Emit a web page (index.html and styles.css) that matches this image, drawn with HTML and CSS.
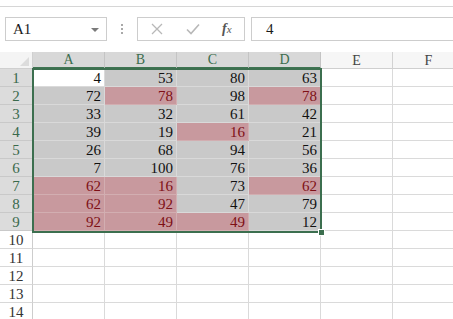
FILE: index.html
```html
<!DOCTYPE html>
<html lang="en">
<head>
  <meta charset="UTF-8">
  <title>Sheet1</title>
  <link rel="stylesheet" href="styles.css">
</head>
<body>
  <div class="ribbon"></div>

  <div class="formula-bar">
    <div class="name-box">
      <span>A1</span>
      <svg class="caret" width="8" height="5" viewBox="0 0 8 5"><path d="M0 0h8L4 4z" fill="#7a7a7a"/></svg>
    </div>
    <div class="grip"><i></i><i></i><i></i></div>
    <div class="fx-buttons">
      <svg class="fx-btn" width="12" height="12" viewBox="0 0 12 12"><path d="M1 1l10 10M11 1L1 11" stroke="#b8b8b8" stroke-width="1.3" fill="none"/></svg>
      <svg class="fx-btn" width="14" height="12" viewBox="0 0 14 12"><path d="M1 6.5l4 4 8-9" stroke="#b8b8b8" stroke-width="1.6" fill="none"/></svg>
      <span class="fx"><em>f</em><small>x</small></span>
    </div>
    <div class="formula-input">4</div>
  </div>

  <div class="sheet">
    <div class="corner"><span class="corner-tri"></span></div>
    <div class="col-head sel">A</div>
    <div class="col-head sel">B</div>
    <div class="col-head sel">C</div>
    <div class="col-head sel">D</div>
    <div class="col-head">E</div>
    <div class="col-head">F</div>

    <div class="row-head sel">1</div>
    <div class="cell active">4</div><div class="cell in">53</div><div class="cell in">80</div><div class="cell in">63</div><div class="cell"></div><div class="cell"></div>

    <div class="row-head sel">2</div>
    <div class="cell in">72</div><div class="cell bad">78</div><div class="cell in">98</div><div class="cell bad">78</div><div class="cell"></div><div class="cell"></div>

    <div class="row-head sel">3</div>
    <div class="cell in">33</div><div class="cell in">32</div><div class="cell in">61</div><div class="cell in">42</div><div class="cell"></div><div class="cell"></div>

    <div class="row-head sel">4</div>
    <div class="cell in">39</div><div class="cell in">19</div><div class="cell bad">16</div><div class="cell in">21</div><div class="cell"></div><div class="cell"></div>

    <div class="row-head sel">5</div>
    <div class="cell in">26</div><div class="cell in">68</div><div class="cell in">94</div><div class="cell in">56</div><div class="cell"></div><div class="cell"></div>

    <div class="row-head sel">6</div>
    <div class="cell in">7</div><div class="cell in">100</div><div class="cell in">76</div><div class="cell in">36</div><div class="cell"></div><div class="cell"></div>

    <div class="row-head sel">7</div>
    <div class="cell bad">62</div><div class="cell bad">16</div><div class="cell in">73</div><div class="cell bad">62</div><div class="cell"></div><div class="cell"></div>

    <div class="row-head sel">8</div>
    <div class="cell bad">62</div><div class="cell bad">92</div><div class="cell in">47</div><div class="cell in">79</div><div class="cell"></div><div class="cell"></div>

    <div class="row-head sel">9</div>
    <div class="cell bad">92</div><div class="cell bad">49</div><div class="cell bad">49</div><div class="cell in">12</div><div class="cell"></div><div class="cell"></div>

    <div class="row-head">10</div>
    <div class="cell"></div><div class="cell"></div><div class="cell"></div><div class="cell"></div><div class="cell"></div><div class="cell"></div>

    <div class="row-head">11</div>
    <div class="cell"></div><div class="cell"></div><div class="cell"></div><div class="cell"></div><div class="cell"></div><div class="cell"></div>

    <div class="row-head">12</div>
    <div class="cell"></div><div class="cell"></div><div class="cell"></div><div class="cell"></div><div class="cell"></div><div class="cell"></div>

    <div class="row-head">13</div>
    <div class="cell"></div><div class="cell"></div><div class="cell"></div><div class="cell"></div><div class="cell"></div><div class="cell"></div>

    <div class="row-head">14</div>
    <div class="cell"></div><div class="cell"></div><div class="cell"></div><div class="cell"></div><div class="cell"></div><div class="cell"></div>

    <!-- selection outline A1:D9 -->
    <div class="selection"><span class="fill-handle"></span></div>
  </div>
</body>
</html>
```

FILE: styles.css
```css
* {
  box-sizing: border-box;
}
body {
  margin: 0;
  width: 453px;
  height: 319px;
  overflow: hidden;
  background: #fff;
  font-family: "Liberation Serif", serif;
  font-size: 15px;
  color: #1a1a1a;
}

.ribbon {
  height: 7px;
  border-bottom: 1px solid #d6d6d6;
}

/* formula bar */
.formula-bar {
  display: flex;
  align-items: center;
  height: 24px;
  margin-top: 10px;
  padding-left: 5px;
}
.name-box {
  display: flex;
  align-items: center;
  justify-content: space-between;
  width: 102px;
  height: 24px;
  padding: 1px 7px 0 7px;
  border: 1px solid #cdcdcd;
  font-size: 15px;
}
.caret {
  margin-top: 1px;
}
.grip {
  display: flex;
  flex-direction: column;
  gap: 2px;
  margin: 0 14px 0 14px;
}
.grip i {
  display: block;
  width: 2px;
  height: 2px;
  background: #a9a9a9;
}
.fx-buttons {
  display: flex;
  align-items: center;
  width: 108px;
  height: 24px;
  padding-left: 13px;
  border: 1px solid #cdcdcd;
}
.fx-btn {
  margin-right: 23px;
}
.fx-btn + .fx-btn {
  margin-right: 22px;
}
.fx {
  font-style: italic;
  font-size: 14px;
  color: #555;
}
.fx em {
  font-weight: bold;
}
.fx small {
  font-size: 11px;
}
.formula-input {
  flex: 1;
  height: 24px;
  margin-left: 6px;
  margin-right: -4px;
  padding: 3px 0 0 14px;
  border: 1px solid #cdcdcd;
  font-size: 15px;
}

/* grid */
.sheet {
  position: relative;
  display: grid;
  grid-template-columns: 33px repeat(6, 72px);
  grid-template-rows: 17px repeat(14, 18px);
  margin-top: 11px;
}
.corner {
  position: relative;
  background: #f4f4f4;
  border-right: 1px solid #d0d0d0;
  border-bottom: 1px solid #cfcfcf;
}
.corner-tri {
  position: absolute;
  right: 3px;
  bottom: 2px;
  width: 0;
  height: 0;
  border-left: 9px solid transparent;
  border-bottom: 9px solid #dcdcdc;
}
.col-head {
  display: flex;
  align-items: center;
  justify-content: center;
  padding-top: 1px;
  background: #f6f6f6;
  border-right: 1px solid #d2d2d2;
  border-bottom: 1px solid #cfcfcf;
  color: #444;
  font-size: 14px;
  line-height: 1;
}
.col-head.sel {
  background: #d8d8d8;
  border-right-color: #c4c4c4;
  border-bottom: 2px solid #3f7452;
  color: #3c6e4e;
}
.row-head {
  display: flex;
  align-items: center;
  justify-content: center;
  padding-top: 1px;
  background: #fff;
  border-right: 1px solid #cdcdcd;
  border-bottom: 1px solid #d8d8d8;
  color: #333;
  font-size: 15px;
}
.row-head.sel {
  background: #dcdcdc;
  border-bottom-color: #c9c9c9;
  color: #3a6a4c;
}
.cell {
  display: flex;
  align-items: center;
  justify-content: flex-end;
  padding: 1px 3px 0 0;
  border-right: 1px solid #dadada;
  border-bottom: 1px solid #dadada;
  font-size: 15px;
  color: #111;
}
.cell.in {
  background: #c9c9c9;
  border-color: #d9d9d9;
}
.cell.bad {
  background: #c8999e;
  border-color: #d2aeb1;
  color: #7e1016;
}
.cell.active {
  background: #fff;
}

.selection {
  position: absolute;
  left: 32px;
  top: 16px;
  width: 290px;
  height: 165px;
  border: 2px solid #3c6f4f;
  pointer-events: none;
}
.fill-handle {
  position: absolute;
  right: -5px;
  bottom: -5px;
  width: 7px;
  height: 7px;
  background: #3c6f4f;
  border: 1px solid #fff;
}
```
